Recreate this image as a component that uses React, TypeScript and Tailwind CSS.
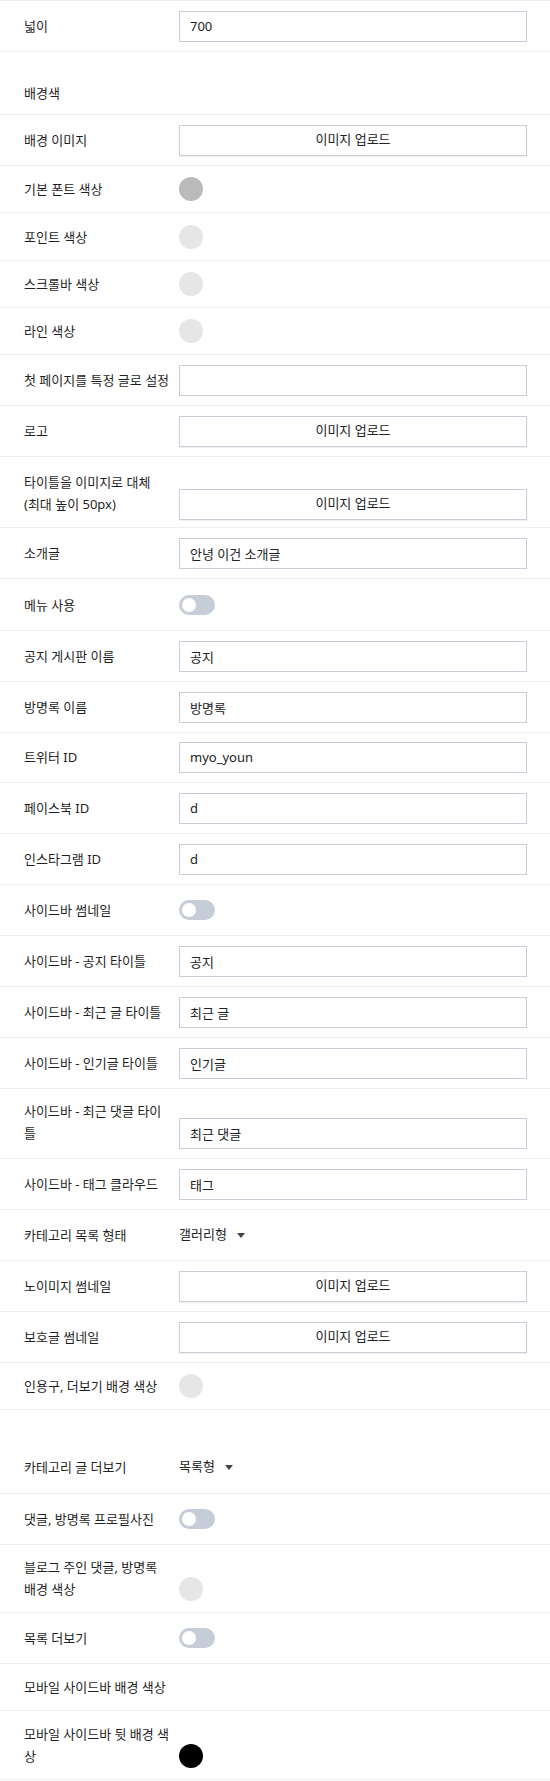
import React from 'react';

type Control =
  | { kind: 'input'; value: string }
  | { kind: 'upload' }
  | { kind: 'color'; color: string }
  | { kind: 'toggle' }
  | { kind: 'select'; value: string }
  | { kind: 'none' };

type Setting = {
  label: React.ReactNode;
  // full row height (border included) and bottom padding, written out in full for Tailwind
  size: string;
  control: Control;
};

const lightDot = 'bg-[#e6e6e6]';

const settings: Setting[] = [
  { label: '넓이', size: 'h-[51px] pb-[14px]', control: { kind: 'input', value: '700' } },
  { label: '배경색', size: 'h-[63px] pb-[10px]', control: { kind: 'none' } },
  { label: '배경 이미지', size: 'h-[51px] pb-[14px]', control: { kind: 'upload' } },
  { label: '기본 폰트 색상', size: 'h-[47px] pb-[12px]', control: { kind: 'color', color: 'bg-[#bababa]' } },
  { label: '포인트 색상', size: 'h-[48px] pb-[12px]', control: { kind: 'color', color: lightDot } },
  { label: '스크롤바 색상', size: 'h-[47px] pb-[12px]', control: { kind: 'color', color: lightDot } },
  { label: '라인 색상', size: 'h-[47px] pb-[12px]', control: { kind: 'color', color: lightDot } },
  { label: '첫 페이지를 특정 글로 설정', size: 'h-[51px] pb-[14px]', control: { kind: 'input', value: '' } },
  { label: '로고', size: 'h-[51px] pb-[14px]', control: { kind: 'upload' } },
  {
    label: (
      <>
        타이틀을 이미지로 대체
        <br />
        (최대 높이 50px)
      </>
    ),
    size: 'h-[71px] pb-[12px]',
    control: { kind: 'upload' },
  },
  { label: '소개글', size: 'h-[51px] pb-[14px]', control: { kind: 'input', value: '안녕 이건 소개글' } },
  { label: '메뉴 사용', size: 'h-[52px] pb-[14px]', control: { kind: 'toggle' } },
  { label: '공지 게시판 이름', size: 'h-[51px] pb-[14px]', control: { kind: 'input', value: '공지' } },
  { label: '방명록 이름', size: 'h-[51px] pb-[14px]', control: { kind: 'input', value: '방명록' } },
  { label: '트위터 ID', size: 'h-[50px] pb-[14px]', control: { kind: 'input', value: 'myo_youn' } },
  { label: '페이스북 ID', size: 'h-[51px] pb-[14px]', control: { kind: 'input', value: 'd' } },
  { label: '인스타그램 ID', size: 'h-[51px] pb-[14px]', control: { kind: 'input', value: 'd' } },
  { label: '사이드바 썸네일', size: 'h-[51px] pb-[14px]', control: { kind: 'toggle' } },
  { label: '사이드바 - 공지 타이틀', size: 'h-[51px] pb-[14px]', control: { kind: 'input', value: '공지' } },
  { label: '사이드바 - 최근 글 타이틀', size: 'h-[51px] pb-[14px]', control: { kind: 'input', value: '최근 글' } },
  { label: '사이드바 - 인기글 타이틀', size: 'h-[51px] pb-[14px]', control: { kind: 'input', value: '인기글' } },
  {
    label: (
      <>
        사이드바 - 최근 댓글 타이
        <br />틀
      </>
    ),
    size: 'h-[70px] pb-[14px]',
    control: { kind: 'input', value: '최근 댓글' },
  },
  { label: '사이드바 - 태그 클라우드', size: 'h-[51px] pb-[14px]', control: { kind: 'input', value: '태그' } },
  { label: '카테고리 목록 형태', size: 'h-[51px] pb-[14px]', control: { kind: 'select', value: '갤러리형' } },
  { label: '노이미지 썸네일', size: 'h-[51px] pb-[14px]', control: { kind: 'upload' } },
  { label: '보호글 썸네일', size: 'h-[51px] pb-[14px]', control: { kind: 'upload' } },
  { label: '인용구, 더보기 배경 색상', size: 'h-[47px] pb-[12px]', control: { kind: 'color', color: lightDot } },
  { label: '카테고리 글 더보기', size: 'h-[84px] pb-[15px]', control: { kind: 'select', value: '목록형' } },
  { label: '댓글, 방명록 프로필사진', size: 'h-[51px] pb-[14px]', control: { kind: 'toggle' } },
  {
    label: (
      <>
        블로그 주인 댓글, 방명록
        <br />
        배경 색상
      </>
    ),
    size: 'h-[68px] pb-[12px]',
    control: { kind: 'color', color: lightDot },
  },
  { label: '목록 더보기', size: 'h-[51px] pb-[14px]', control: { kind: 'toggle' } },
  { label: '모바일 사이드바 배경 색상', size: 'h-[47px] pb-[12px]', control: { kind: 'none' } },
  {
    label: (
      <>
        모바일 사이드바 뒷 배경 색
        <br />상
      </>
    ),
    size: 'h-[69px] pb-[12px]',
    control: { kind: 'color', color: 'bg-black' },
  },
];

function ControlView({ control }: { control: Control }) {
  switch (control.kind) {
    case 'input':
      return (
        <input
          readOnly
          value={control.value}
          className="h-[31px] w-full shrink-0 border border-[#c9ced8] bg-white px-[10px] text-[13px] text-[#222] outline-none"
        />
      );
    case 'upload':
      return (
        <button
          type="button"
          className="h-[31px] w-full shrink-0 border border-[#c9ced8] bg-white text-[13px] text-[#222] shadow-[0_1px_1px_rgba(0,0,0,0.06)]"
        >
          이미지 업로드
        </button>
      );
    case 'color':
      return <span className={`h-[24px] w-[24px] shrink-0 rounded-full ${control.color}`} />;
    case 'toggle':
      return (
        <span className="flex h-[20px] w-[36px] shrink-0 items-center rounded-full bg-[#c6cdd8]">
          <span className="ml-[3px] h-[14px] w-[14px] rounded-full bg-white" />
        </span>
      );
    case 'select':
      return (
        <span className="flex items-center gap-[10px] text-[13px] text-[#222]">
          {control.value}
          <svg width="8" height="5" viewBox="0 0 8 5" className="mt-[1px]">
            <path d="M0 0h8L4 5z" fill="#444" />
          </svg>
        </span>
      );
    default:
      return null;
  }
}

export default function App() {
  return (
    <div
      className="min-h-screen bg-white text-[#222]"
      style={{ fontFamily: '"Noto Sans", "Noto Sans CJK KR", sans-serif' }}
    >
      <div className="border-t border-[#eceef1]">
        {settings.map((s, i) => (
          <div
            key={i}
            className={`flex items-end border-b border-[#eceef1] pl-[24px] pr-[23px] ${s.size}`}
          >
            <div className="w-[155px] shrink-0 whitespace-nowrap text-[13px] leading-[22px] text-[#1f1f1f]">
              {s.label}
            </div>
            <div className="flex h-[22px] min-w-0 flex-1 items-center">
              <ControlView control={s.control} />
            </div>
          </div>
        ))}
      </div>
    </div>
  );
}
